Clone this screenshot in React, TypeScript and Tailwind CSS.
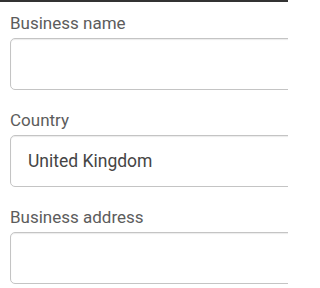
const font = { fontFamily: "Roboto, 'Liberation Sans', sans-serif" };

function Field({ label, value }: { label: string; value?: string }) {
  return (
    <div className="flex flex-col">
      <label className="text-[17px] leading-6 text-[#5c5c5c]">{label}</label>
      <div className="mt-[3px] h-[52px] w-[320px] shrink-0 rounded-[5px] border border-[#c4c4c4] bg-white shadow-[inset_0_1px_1px_rgba(0,0,0,0.08)] flex items-center pl-[17px]">
        {value && <span className="text-[17.5px] text-[#454545]">{value}</span>}
      </div>
    </div>
  );
}

export default function App() {
  return (
    <div
      className="w-[288px] h-[288px] overflow-hidden bg-white border-t-2 border-[#333333] pl-[10px] pt-[9px] flex flex-col gap-[18px]"
      style={font}
    >
      <Field label="Business name" />
      <Field label="Country" value="United Kingdom" />
      <Field label="Business address" />
    </div>
  );
}
